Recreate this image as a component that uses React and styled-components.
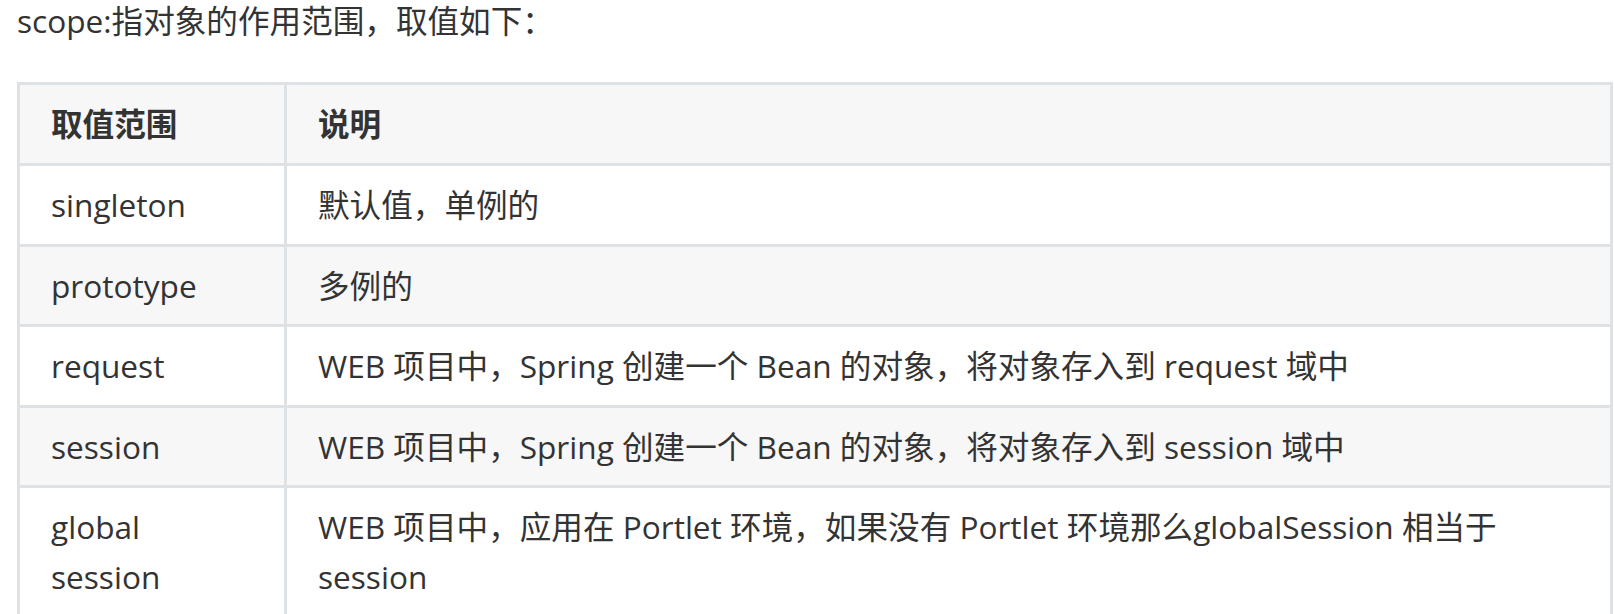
import React from "react"
import styled, { createGlobalStyle } from "styled-components"

const GlobalStyle = createGlobalStyle`
    body {
        margin: 0;
        background: #fff;
    }
`

const Page = styled.div`
    padding: 0 1px 0 17px;
    font-family: "Open Sans", "Noto Sans CJK SC", sans-serif;
    font-size: 31.6px;
    color: #333;
    overflow: hidden;
`

const Title = styled.p`
    margin: -4px 0 37px;
    line-height: 49px;
`

const Table = styled.table`
    width: 100%;
    border-collapse: collapse;
    table-layout: fixed;
`

const Row = styled.tr`
    background: ${(p) => (p.$shaded ? "#f7f7f7" : "#fff")};
`

const Head = styled.th`
    box-sizing: border-box;
    border: 3px solid #dfe2e5;
    padding: 14px 30px 14px 31px;
    text-align: left;
    font-weight: 700;
    line-height: 50px;
    width: ${(p) => p.$width || "auto"};
`

const Cell = styled.td`
    border: 3px solid #dfe2e5;
    padding: 14px 30px 13.5px 31px;
    line-height: 50px;
    vertical-align: top;
`

const rows = [
    ["singleton", "默认值，单例的"],
    ["prototype", "多例的"],
    ["request", "WEB 项目中，Spring 创建一个 Bean 的对象，将对象存入到 request 域中"],
    ["session", "WEB 项目中，Spring 创建一个 Bean 的对象，将对象存入到 session 域中"],
    ["global session", "WEB 项目中，应用在 Portlet 环境，如果没有 Portlet 环境那么globalSession 相当于 session"],
]

const App = () => {
    return (
        <Page>
            <GlobalStyle />
            <Title>scope:指对象的作用范围，取值如下：</Title>
            <Table>
                <thead>
                    <Row $shaded>
                        <Head $width="267px">取值范围</Head>
                        <Head>说明</Head>
                    </Row>
                </thead>
                <tbody>
                    {rows.map(([name, desc], i) => (
                        <Row key={name} $shaded={i % 2 === 1}>
                            <Cell>{name}</Cell>
                            <Cell>{desc}</Cell>
                        </Row>
                    ))}
                </tbody>
            </Table>
        </Page>
    )
}

export default App
